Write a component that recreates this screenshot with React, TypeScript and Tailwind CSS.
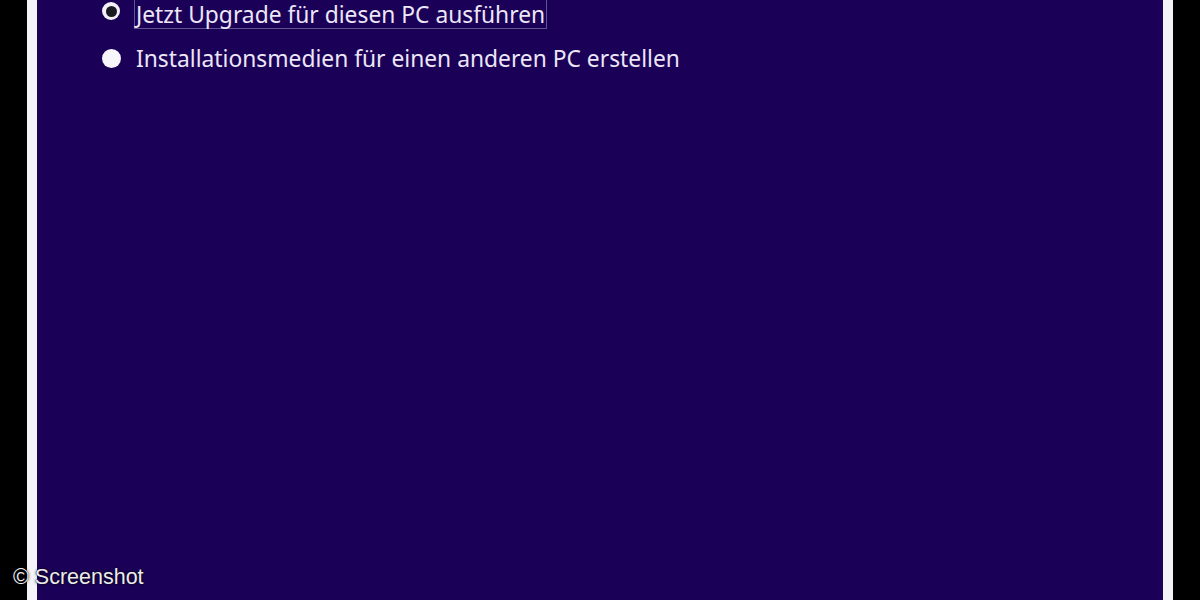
export default function App() {
  return (
    <div className="relative flex h-[600px] w-[1200px] overflow-hidden bg-black">
      <div className="ml-[27px] w-[10px] bg-[#f4f3f7]" />
      <div className="w-[1126px] bg-[#1b0058] pl-[65px]">
        <div className="flex flex-col gap-[15px] font-['Noto_Sans',sans-serif] text-[22.8px] text-[#ebe7f6]">
          <div className="flex h-[29px] items-start gap-[14px]">
            <span className="mt-[2px] flex h-[18px] w-[18px] items-center justify-center rounded-full bg-[#f2f0f8]">
              <span className="h-[11px] w-[11px] rounded-full bg-[#1a1a22]" />
            </span>
            <span className="border border-t-0 border-[#5d5490] px-[1px] pt-[1px] leading-[27px]">
              Jetzt Upgrade für diesen PC ausführen
            </span>
          </div>
          <div className="flex h-[29px] items-center gap-[14px]">
            <span className="h-[19px] w-[19px] rounded-full bg-[#f7f6fb]" />
            <span className="px-[1px] leading-[27px]">
              Installationsmedien für einen anderen PC erstellen
            </span>
          </div>
        </div>
      </div>
      <div className="w-[10px] bg-[#f4f3f7]" />
      <div className="absolute bottom-[7px] left-[13px] font-['Liberation_Sans',sans-serif] text-[21.5px] text-[#ececf0] [text-shadow:0_0_3px_rgba(0,0,0,0.9),0_0_1px_rgba(0,0,0,0.9)]">
        © Screenshot
      </div>
    </div>
  );
}
